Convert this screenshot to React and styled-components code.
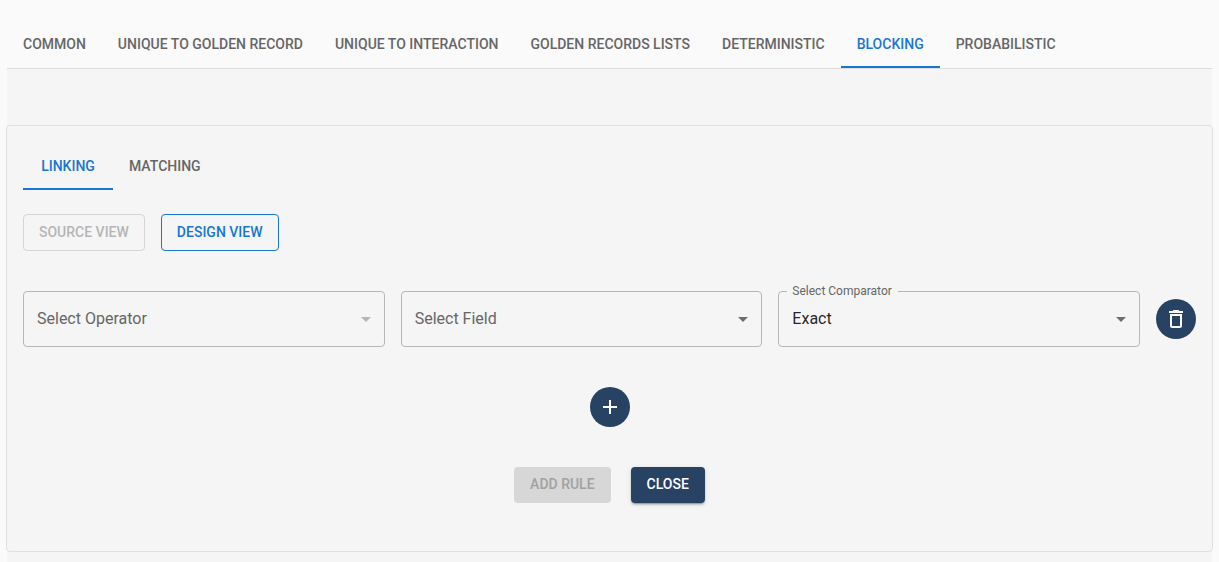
import React, { useId, useState } from 'react';
import styled, { createGlobalStyle, css } from 'styled-components';

const GlobalStyle = createGlobalStyle`
  *, *::before, *::after { box-sizing: border-box; }
  html { min-height: 100%; background: #fafafa; }
  body {
    margin: 0;
    color: rgba(0, 0, 0, 0.87);
    font-family: Roboto, "Liberation Sans", sans-serif;
    font-size: 16px;
    line-height: 24px;
  }
  button, select { font-family: inherit; }
`;

const Page = styled.main`
  display: flex;
  flex-direction: column;
  min-height: 100vh;
  padding: 20px 7px 0;
`;

const TabBar = styled.div`
  display: flex;
  border-bottom: ${(p) => (p.$divided ? '1px solid #dcdcdc' : '0')};
`;

const Tab = styled.button`
  min-width: 90px;
  height: 48px;
  padding: 2px 16px 0;
  border: 0;
  border-bottom: 2px solid ${(p) => (p['aria-selected'] ? '#1976d2' : 'transparent')};
  background: none;
  color: ${(p) => (p['aria-selected'] ? '#1976d2' : '#666666')};
  font-size: 14px;
  font-weight: 500;
  line-height: 18px;
  text-transform: uppercase;
  white-space: nowrap;
  cursor: pointer;
`;

const Content = styled.div`
  flex: 1;
  padding: 56px 0 10px;
  background: #f5f5f5;
`;

const Panel = styled.section`
  display: flex;
  flex-direction: column;
  margin: 0 -1px;
  padding: 16px 16px 48px;
  border: 1px solid #e0e0e0;
  border-radius: 4px;
  background: #f5f5f5;
`;

const ViewButtons = styled.div`
  display: flex;
  gap: 16px;
  margin-top: 24px;
`;

const variants = {
  outlined: css`
    height: 37px;
    padding: 0 15px 2px;
    border: 1px solid #1976d2;
    background: none;
    color: #1976d2;
    &:disabled { border-color: #d5d5d5; color: #b5b5b5; }
  `,
  contained: css`
    height: 36px;
    padding: 0 16px 2px;
    border: 0;
    background: #274263;
    color: #ffffff;
    box-shadow: 0 3px 1px -2px rgba(0, 0, 0, 0.2), 0 2px 2px 0 rgba(0, 0, 0, 0.14),
      0 1px 5px 0 rgba(0, 0, 0, 0.12);
    &:disabled { background: #d7d7d7; color: #a1a1a1; box-shadow: none; }
  `,
};

const Button = styled.button`
  border-radius: 4px;
  font-size: 14px;
  font-weight: 500;
  line-height: 24px;
  text-transform: uppercase;
  cursor: pointer;
  ${(p) => variants[p.$variant]}
  &:disabled { cursor: default; }
`;

const RuleRow = styled.div`
  display: flex;
  align-items: center;
  gap: 16px;
  margin-top: 40px;
`;

const Field = styled.div`
  position: relative;
  display: flex;
  flex: 1;
  align-items: center;
  min-width: 0;
`;

const Select = styled.select`
  width: 100%;
  height: 56px;
  padding: 0 32px 0 13px;
  border: 1px solid #b7b7b7;
  border-radius: 4px;
  appearance: none;
  background: none;
  color: rgba(0, 0, 0, 0.87);
  font-size: 16px;
  line-height: 24px;
  opacity: 1;
`;

const FieldLabel = styled.label`
  position: absolute;
  left: 14px;
  color: #666666;
  pointer-events: none;
  ${(p) => p.$raised && css`
    top: -8px;
    left: 9px;
    padding: 0 6px 0 5px;
    background: #f5f5f5;
    font-size: 12px;
    line-height: 16px;
  `}
`;

const Arrow = styled.svg`
  position: absolute;
  right: 7px;
  width: 24px;
  height: 24px;
  fill: ${(p) => (p.$disabled ? '#b5b5b5' : '#6e6e6e')};
  pointer-events: none;
`;

const RoundButton = styled.button`
  display: flex;
  flex: none;
  align-items: center;
  justify-content: center;
  width: 40px;
  height: 40px;
  padding: 0;
  border: 0;
  border-radius: 50%;
  background: #274263;
  cursor: pointer;
  svg { width: 24px; height: 24px; fill: #ffffff; }
`;

const AddRow = styled.div`
  display: flex;
  justify-content: center;
  margin-top: 40px;
`;

const Actions = styled(AddRow)`
  gap: 20px;
`;

function Tabs({ items, initial, label, divided }) {
  const [active, setActive] = useState(initial);
  return (
    <TabBar role="tablist" aria-label={label} $divided={divided}>
      {items.map((item) => (
        <Tab
          key={item}
          type="button"
          role="tab"
          aria-selected={item === active}
          onClick={() => setActive(item)}
        >
          {item}
        </Tab>
      ))}
    </TabBar>
  );
}

function SelectField({ label, options, initial = '', disabled }) {
  const id = useId();
  const [value, setValue] = useState(initial);
  return (
    <Field>
      <Select id={id} value={value} disabled={disabled} onChange={(e) => setValue(e.target.value)}>
        <option value="" />
        {options.map((option) => (
          <option key={option}>{option}</option>
        ))}
      </Select>
      <FieldLabel htmlFor={id} $raised={value !== ''}>{label}</FieldLabel>
      <Arrow viewBox="0 0 24 24" $disabled={disabled} aria-hidden="true">
        <path d="M7 10l5 5 5-5z" />
      </Arrow>
    </Field>
  );
}

const sections = [
  'Common',
  'Unique to Golden Record',
  'Unique to Interaction',
  'Golden Records Lists',
  'Deterministic',
  'Blocking',
  'Probabilistic',
];

export default function App() {
  return (
    <>
      <GlobalStyle />
      <Page>
        <Tabs items={sections} initial="Blocking" label="Configuration" divided />
        <Content>
          <Panel>
            <Tabs items={['Linking', 'Matching']} initial="Linking" label="Rule type" />
            <ViewButtons>
              <Button type="button" $variant="outlined" disabled>Source View</Button>
              <Button type="button" $variant="outlined">Design View</Button>
            </ViewButtons>
            <RuleRow>
              <SelectField label="Select Operator" options={[]} disabled />
              <SelectField label="Select Field" options={[]} />
              <SelectField label="Select Comparator" options={['Exact']} initial="Exact" />
              <RoundButton type="button" aria-label="Delete row">
                <svg viewBox="0 0 24 24" aria-hidden="true">
                  <path d="M6 19c0 1.100.9 2 2 2h8c1.100 0 2-.9 2-2V7H6v12zM8 9h8v10H8V9zm7.500-5l-1-1h-5l-1 1H5v2h14V4z" />
                </svg>
              </RoundButton>
            </RuleRow>
            <AddRow>
              <RoundButton type="button" aria-label="Add row">
                <svg viewBox="0 0 24 24" aria-hidden="true">
                  <path d="M19 13h-6v6h-2v-6H5v-2h6V5h2v6h6v2z" />
                </svg>
              </RoundButton>
            </AddRow>
            <Actions>
              <Button type="button" $variant="contained" disabled>Add Rule</Button>
              <Button type="button" $variant="contained">Close</Button>
            </Actions>
          </Panel>
        </Content>
      </Page>
    </>
  );
}
